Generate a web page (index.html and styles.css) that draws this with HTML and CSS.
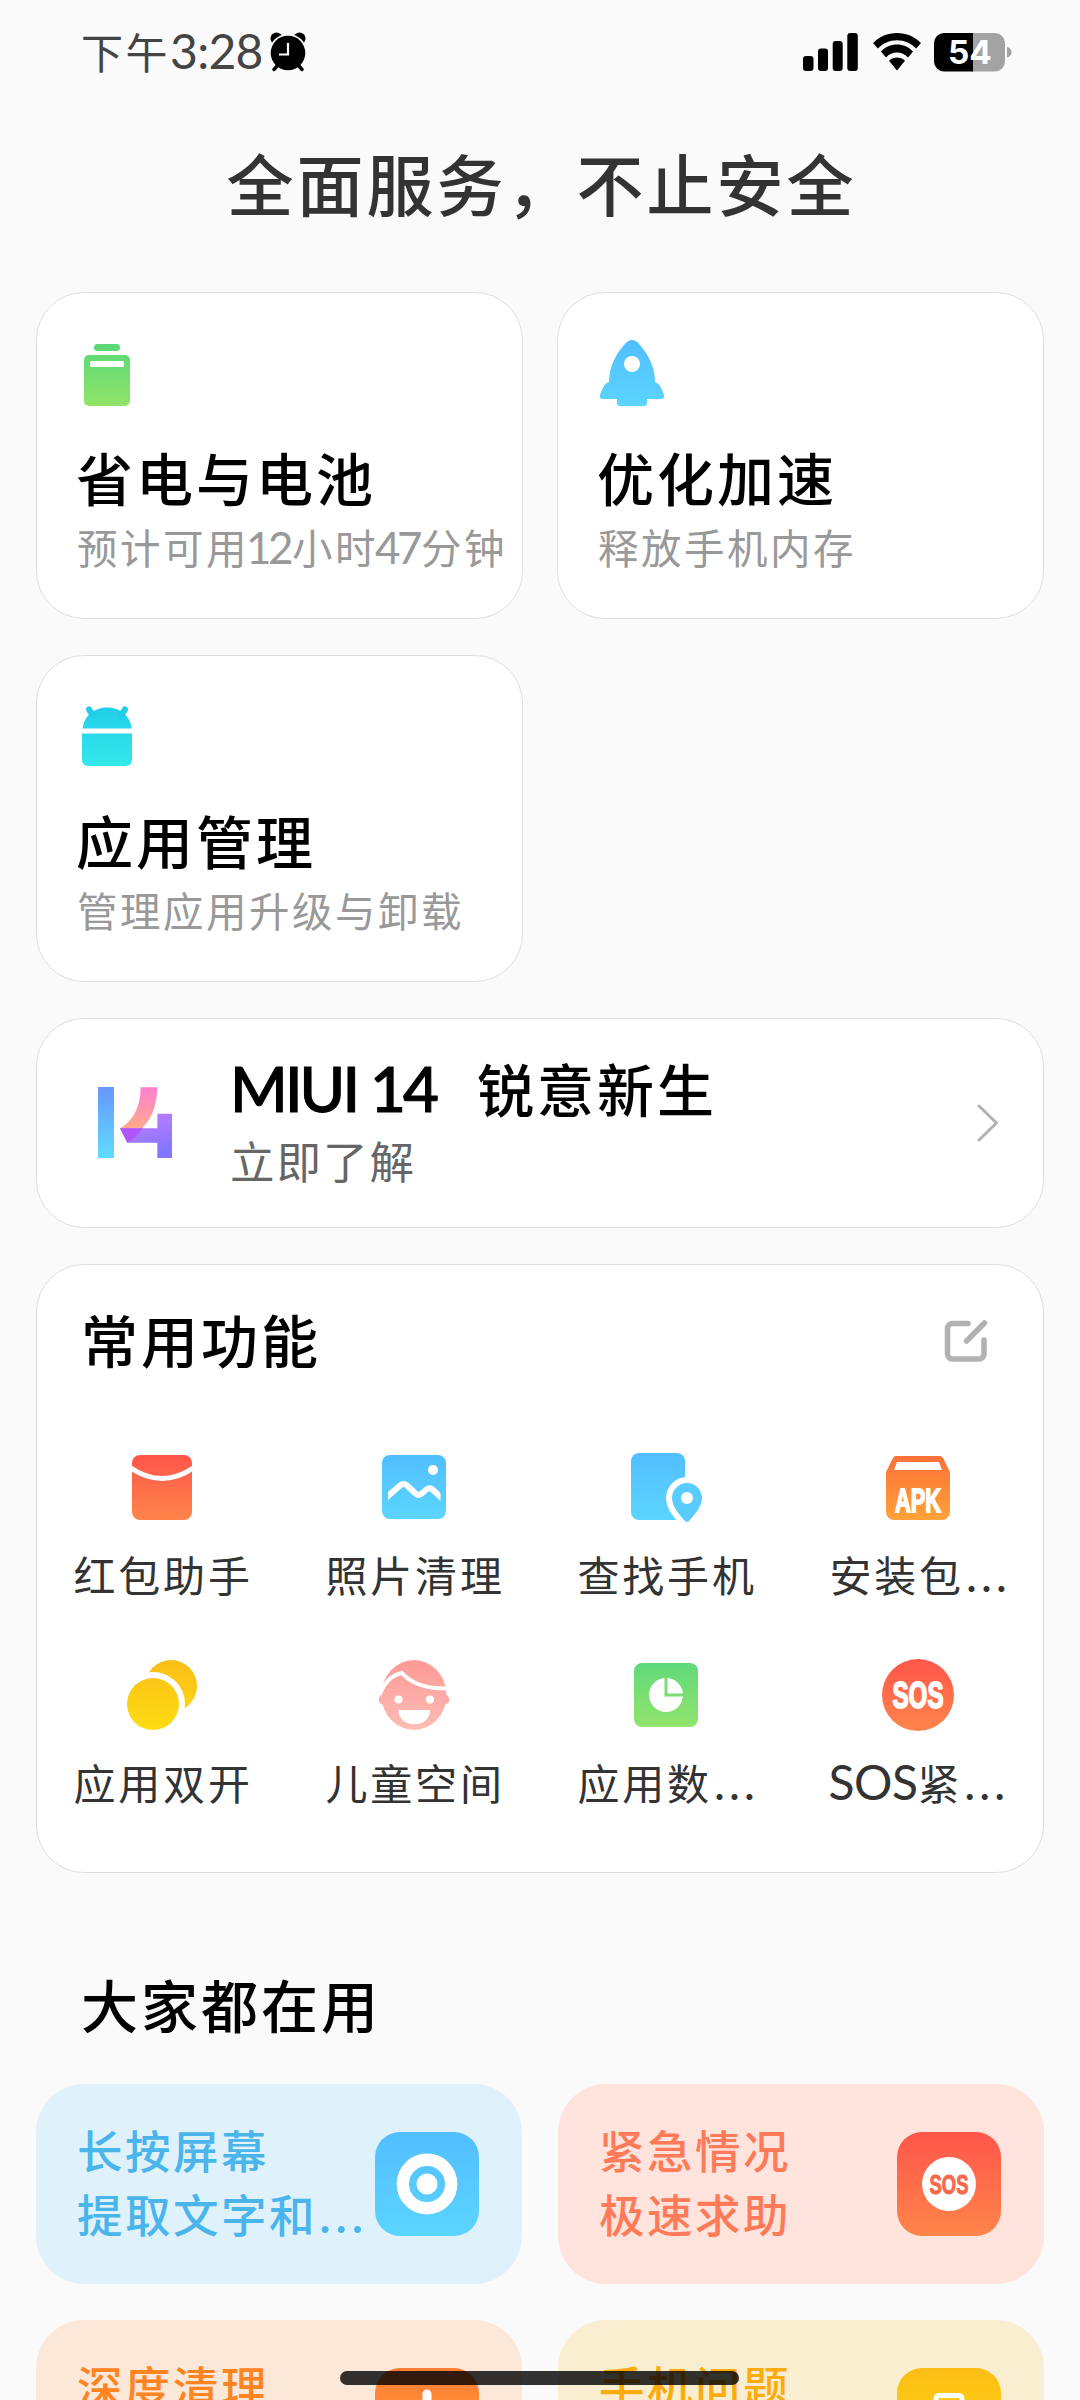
FILE: index.html
```html
<!DOCTYPE html>
<html lang="zh-CN">
<head>
<meta charset="utf-8">
<title>手机管家</title>
<link rel="stylesheet" href="styles.css">
</head>
<body>
<svg class="defs" aria-hidden="true">
  <defs>
    <linearGradient id="green" x1="0" y1="0" x2="0" y2="1"><stop offset="0" stop-color="#60d97b"/><stop offset="1" stop-color="#92e46c"/></linearGradient>
    <linearGradient id="greenAbs" gradientUnits="userSpaceOnUse" x1="0" y1="6" x2="0" y2="68"><stop offset="0" stop-color="#58d878"/><stop offset="1" stop-color="#90e468"/></linearGradient>
    <linearGradient id="blue" x1="0" y1="0" x2="0" y2="1"><stop offset="0" stop-color="#52beff"/><stop offset="1" stop-color="#5bd5ff"/></linearGradient>
    <linearGradient id="cyan" gradientUnits="userSpaceOnUse" x1="0" y1="6" x2="0" y2="65"><stop offset="0" stop-color="#22cdea"/><stop offset="1" stop-color="#33e9ea"/></linearGradient>
    <linearGradient id="red" x1="0" y1="0" x2="0" y2="1"><stop offset="0" stop-color="#ff564a"/><stop offset="1" stop-color="#ff854a"/></linearGradient>
    <linearGradient id="orange" x1="0" y1="0" x2="0" y2="1"><stop offset="0" stop-color="#fb7138"/><stop offset="1" stop-color="#ffa23a"/></linearGradient>
    <linearGradient id="clean" x1="0" y1="0" x2="0" y2="1"><stop offset="0" stop-color="#ff7c34"/><stop offset="1" stop-color="#ffa63a"/></linearGradient>
    <linearGradient id="yellow" gradientUnits="userSpaceOnUse" x1="0" y1="5" x2="0" y2="75"><stop offset="0" stop-color="#fbbd18"/><stop offset="1" stop-color="#fddd12"/></linearGradient>
    <linearGradient id="amber" x1="0" y1="0" x2="0" y2="1"><stop offset="0" stop-color="#fcbd14"/><stop offset="1" stop-color="#fddd14"/></linearGradient>
    <linearGradient id="pink" gradientUnits="userSpaceOnUse" x1="0" y1="5" x2="0" y2="75"><stop offset="0" stop-color="#ff9995"/><stop offset="1" stop-color="#fcbdb6"/></linearGradient>
    <linearGradient id="logoBar" x1="0" y1="0" x2="0" y2="1"><stop offset="0" stop-color="#6797ff"/><stop offset="1" stop-color="#60dcff"/></linearGradient>
    <linearGradient id="logoPink" x1="0" y1="0" x2="0" y2="1"><stop offset="0" stop-color="#ff7fd0"/><stop offset="1" stop-color="#ffaa8c"/></linearGradient>
    <linearGradient id="logoPurple" x1="0" y1="0" x2=".3" y2="1"><stop offset="0" stop-color="#c47fff"/><stop offset="1" stop-color="#8476ff"/></linearGradient>
  </defs>
</svg>

<header class="status">
  <div class="status-left">
    <span class="clock">下午<span class="clock-digits">3:28</span></span>
    <svg class="alarm" width="36" height="40" viewBox="0 0 36 40">
      <circle cx="6.500" cy="6.500" r="6"/><circle cx="29.500" cy="6.500" r="6"/>
      <circle cx="18" cy="21" r="19" fill="#fafafa"/>
      <path d="M8 33l-4 4.500M28 33l4 4.500" stroke="#000" stroke-width="3.500" stroke-linecap="round"/>
      <circle cx="18" cy="21" r="17.300"/>
      <path d="M18 11v11.500H9" fill="none" stroke="#fff" stroke-width="2.200"/>
    </svg>
  </div>
  <div class="status-right">
    <svg width="55" height="38" viewBox="0 0 55 38">
      <rect x="0" y="23" width="10.500" height="15" rx="3"/><rect x="15" y="15.500" width="10" height="22.500" rx="3"/>
      <rect x="29.700" y="8" width="10" height="30" rx="3"/><rect x="44.300" y="0" width="10.500" height="38" rx="3"/>
    </svg>
    <svg width="48" height="38" viewBox="0 0 48 38">
      <path d="M24 0C14.500 0 6.500 3.500 0 10l4.800 5.600C10 10.300 16.500 7.300 24 7.300s14 3 19.200 8.300L48 10C41.500 3.500 33.500 0 24 0z"/>
      <path d="M24 11.500c-6.200 0-11.700 2.500-16 7l5 6c3-3.200 6.800-5 11-5s8 1.800 11 5l5-6c-4.300-4.500-9.800-7-16-7z"/>
      <path d="M24 24.500c-3 0-5.600 1-8 3.200L24 37.500l8-9.800c-2.400-2.200-5-3.200-8-3.200z"/>
    </svg>
    <svg width="78" height="39" viewBox="0 0 78 39">
      <path d="M38 0H61a10 10 0 0 1 10 10V28.500a10 10 0 0 1-10 10H38z" fill="#a3a3a3"/>
      <path d="M39 0H10A10 10 0 0 0 0 10V28.500a10 10 0 0 0 10 10H39z"/>
      <path d="M73 14c6 1.500 6 9 0 10.500z" fill="#a3a3a3"/>
      <text class="battery-level" x="36" y="31" text-anchor="middle" textLength="44" lengthAdjust="spacingAndGlyphs">54</text>
    </svg>
  </div>
</header>

<h1 class="headline">全面服务，不止安全</h1>

<main class="content">
  <section class="tiles">
    <article class="card tile">
      <svg width="72" height="72" viewBox="0 0 72 72" fill="url(#greenAbs)">
        <rect x="16" y="6" width="26" height="7" rx="3.500"/>
        <path fill-rule="evenodd" d="M11 17H47a5 5 0 0 1 5 5V63a5 5 0 0 1-5 5H11a5 5 0 0 1-5-5V22a5 5 0 0 1 5-5zM13.500 23a1.500 1.500 0 0 0-1.500 1.500v3a1.500 1.500 0 0 0 1.500 1.500h31a1.500 1.500 0 0 0 1.500-1.500v-3a1.500 1.500 0 0 0-1.500-1.500z"/>
      </svg>
      <h2 class="title">省电与电池</h2>
      <p class="sub">预计可用<span class="num">12</span>小时<span class="num">47</span>分钟</p>
    </article>
    <article class="card tile">
      <svg width="72" height="72" viewBox="0 0 72 72">
        <path fill="url(#blue)" d="M33 2c3 0 6 2 8 5C50 17 56 30 56 44c5 2 6 5 9 13q1 4-3 4H48v4q0 3-3 3H21q-3 0-3-3v-4H4q-4 0-3-4c3-8 4-11 9-13C10 30 16 17 25 7c2-3 5-5 8-5z"/>
        <circle cx="33" cy="26" r="8" fill="#fff"/>
      </svg>
      <h2 class="title">优化加速</h2>
      <p class="sub">释放手机内存</p>
    </article>
    <article class="card tile">
      <svg width="72" height="72" viewBox="0 0 72 72" fill="url(#cyan)">
        <path d="M4.700 27.500C6 14 17 6.500 29 6.500s23 7 24.700 21z"/>
        <path d="M4 32.500H54V59a6 6 0 0 1-6 6H10a6 6 0 0 1-6-6z"/>
        <path d="M11 8.500l4 6M47 8.500l-4 6" stroke="#22cdea" stroke-width="6" stroke-linecap="round"/>
      </svg>
      <h2 class="title">应用管理</h2>
      <p class="sub">管理应用升级与卸载</p>
    </article>
  </section>

  <section class="card banner">
    <svg class="logo" width="74" height="71" viewBox="0 0 222 213">
      <rect width="48" height="213" fill="url(#logoBar)"/>
      <path d="M178 80h44v133h-44v-46H88L66 124h112z" fill="url(#logoPurple)"/>
      <path d="M128 1h50c-1 50-14 92-46 123H66C104 104 128 60 128 1z" fill="url(#logoPink)"/>
      <path d="M66 124h68c-12 18-27 33-46 43z" fill="#b055f8"/>
    </svg>
    <div class="banner-text">
      <h2 class="title"><span class="latin">MIUI 14</span>锐意新生</h2>
      <p class="banner-sub">立即了解</p>
    </div>
    <svg class="chevron" width="22" height="38" viewBox="0 0 22 38"><path d="M2 2l17.500 17L2 36" fill="none" stroke="#b2b2b2" stroke-width="3" stroke-linecap="round" stroke-linejoin="round"/></svg>
  </section>

  <section class="card tools">
    <div class="tools-head">
      <h2 class="title">常用功能</h2>
      <svg width="44" height="44" viewBox="0 0 44 44" fill="none" stroke="#b2b2b2" stroke-width="5.500" stroke-linecap="round">
        <path d="M24 5.500H8.500a5 5 0 0 0-5 5V36a5 5 0 0 0 5 5H35a5 5 0 0 0 5-5V22"/><path d="M22.500 23L40.500 5"/>
      </svg>
    </div>
    <div class="grid">
      <div class="tool">
        <svg width="80" height="80" viewBox="0 0 80 80">
          <rect x="10" y="8" width="60" height="65" rx="8" fill="url(#red)"/>
          <path d="M8 20.500Q24 31.500 40 31.500T72 20.500" fill="none" stroke="#fff" stroke-width="5"/>
        </svg>
        <span>红包助手</span>
      </div>
      <div class="tool">
        <svg width="80" height="80" viewBox="0 0 80 80">
          <clipPath id="photoClip"><rect x="14" y="20" width="52.500" height="45"/></clipPath>
          <rect x="8" y="8" width="64" height="64" rx="8" fill="url(#blue)"/>
          <circle cx="59" cy="23" r="5" fill="#fff"/>
          <path clip-path="url(#photoClip)" d="M10 52.500L26 38.500Q29.500 35.500 33 38.500L42 47Q44.500 49 47 47L52.500 42.500Q55.500 40 58.500 42.500L70 53" fill="none" stroke="#fff" stroke-width="6"/>
        </svg>
        <span>照片清理</span>
      </div>
      <div class="tool">
        <svg width="80" height="80" viewBox="0 0 80 80">
          <rect x="5" y="6" width="54" height="67" rx="8" fill="url(#blue)"/>
          <path d="M61 36a15 15 0 0 1 15 15c0 9-8 17-13 23q-2 2-4 0c-5-6-13-14-13-23a15 15 0 0 1 15-15z" fill="#5accff" stroke="#fff" stroke-width="12" paint-order="stroke"/>
          <circle cx="61" cy="51" r="6" fill="#fff"/>
        </svg>
        <span>查找手机</span>
      </div>
      <div class="tool">
        <svg width="80" height="80" viewBox="0 0 80 80">
          <path d="M18 9H62q2 0 3 2l7 14V65a8 8 0 0 1-8 8H16a8 8 0 0 1-8-8V25l7-14q1-2 3-2z" fill="url(#orange)"/>
          <path d="M19 15H61l3 8H16z" fill="#fff"/>
          <text class="badge" x="17" y="64.500" font-size="33" textLength="46" lengthAdjust="spacingAndGlyphs">APK</text>
        </svg>
        <span>安装包<i class="dots">…</i></span>
      </div>
      <div class="tool">
        <svg width="80" height="80" viewBox="0 0 80 80">
          <circle cx="49" cy="31" r="26" fill="url(#yellow)"/>
          <circle cx="31" cy="49" r="32" fill="#fff"/>
          <circle cx="31" cy="49" r="26" fill="url(#yellow)"/>
        </svg>
        <span>应用双开</span>
      </div>
      <div class="tool">
        <svg width="80" height="80" viewBox="0 0 80 80">
          <g fill="url(#pink)"><ellipse cx="40" cy="40" rx="32.500" ry="35"/><circle cx="10" cy="44.500" r="5.300"/><circle cx="70" cy="44.500" r="5.300"/></g>
          <path d="M6 39Q13 21 28 18Q42 34.500 76 33.500" fill="none" stroke="#fff" stroke-width="4"/>
          <circle cx="24.500" cy="44.500" r="4" fill="#fff"/><circle cx="56" cy="44.500" r="4" fill="#fff"/>
          <path d="M24.500 55H56c0 9-7 14.300-15.700 14.300S24.500 64 24.500 55z" fill="#fff"/>
        </svg>
        <span>儿童空间</span>
      </div>
      <div class="tool">
        <svg width="80" height="80" viewBox="0 0 80 80">
          <rect x="8" y="8" width="64" height="64" rx="8" fill="url(#green)"/>
          <circle cx="40" cy="40" r="17" fill="#fff"/>
          <path d="M40 22V40H58" fill="none" stroke="#78dd76" stroke-width="3"/>
        </svg>
        <span>应用数<i class="dots">…</i></span>
      </div>
      <div class="tool">
        <svg width="80" height="80" viewBox="0 0 80 80">
          <circle cx="40" cy="40" r="36" fill="url(#red)"/>
          <text class="badge" x="14.500" y="53" font-size="36" textLength="51" lengthAdjust="spacingAndGlyphs">SOS</text>
        </svg>
        <span><b class="sos">SOS</b>紧<i class="dots">…</i></span>
      </div>
    </div>
  </section>

  <h2 class="title section-title">大家都在用</h2>

  <section class="features">
    <article class="feature feature-blue">
      <p>长按屏幕<br>提取文字和<i class="dots">…</i></p>
      <svg width="104" height="104" viewBox="0 0 104 104">
        <rect width="104" height="104" rx="25" fill="url(#blue)"/>
        <circle cx="52" cy="52" r="24.200" fill="none" stroke="#fff" stroke-width="12.400"/>
        <circle cx="52" cy="52" r="10.500" fill="#fff"/>
      </svg>
    </article>
    <article class="feature feature-red">
      <p>紧急情况<br>极速求助</p>
      <svg width="104" height="104" viewBox="0 0 104 104">
        <rect width="104" height="104" rx="25" fill="url(#red)"/>
        <circle cx="52" cy="52" r="27" fill="#fff"/>
        <text class="badge badge-red" x="32.500" y="62" font-size="28" textLength="39" lengthAdjust="spacingAndGlyphs">SOS</text>
      </svg>
    </article>
    <article class="feature feature-orange">
      <p>深度清理<br>释放存储空间</p>
      <svg width="104" height="104" viewBox="0 0 104 104">
        <rect width="104" height="104" rx="25" fill="url(#clean)"/>
        <path d="M52 26V48M36 52H68l5 26H31z" fill="#fff" stroke="#fff" stroke-width="9" stroke-linecap="round" stroke-linejoin="round"/>
      </svg>
    </article>
    <article class="feature feature-yellow">
      <p>手机问题<br>一键检测</p>
      <svg width="104" height="104" viewBox="0 0 104 104">
        <rect width="104" height="104" rx="25" fill="url(#amber)"/>
        <rect x="39" y="27.500" width="26" height="48" rx="3" fill="none" stroke="#fff" stroke-width="5"/>
      </svg>
    </article>
  </section>
</main>
<div class="home-bar"></div>
</body>
</html>
```
FILE: styles.css
```css
* { box-sizing: border-box; margin: 0; padding: 0; }

body {
  position: relative;
  width: 1080px;
  height: 2400px;
  overflow: hidden;
  background: #fafafa;
  color: #000;
  font-family: "Noto Sans CJK SC", sans-serif;
}

svg { display: block; flex: none; }
.defs { position: absolute; width: 0; height: 0; }

/* status bar */
.status {
  display: flex;
  justify-content: space-between;
  height: 120px;
  padding: 32px 68px 0 81px;
}
.status-left { display: flex; height: 40px; align-items: center; gap: 8px; }
.status-right { display: flex; height: 40px; align-items: center; gap: 15px; }
.status-right svg:last-child { margin-left: -2px; }
.clock {
  width: 181px;
  margin-top: -3px;
  color: #444;
  font-size: 42px;
  line-height: 40px;
  letter-spacing: 2.5px;
  white-space: nowrap;
}
.clock-digits { font-family: Lato, sans-serif; font-size: 48px; letter-spacing: -.7px; line-height: 1; }
.battery-level { fill: #fff; font: 700 33px Inter, sans-serif; }

.headline {
  height: 172px;
  padding: 12px 0 0 3px;
  color: #333;
  font-size: 67px;
  font-weight: 500;
  line-height: 100px;
  letter-spacing: 3px;
  text-align: center;
}

.content { padding: 0 36px; }

.card {
  background: #fff;
  border: 1px solid #dedede;
  border-radius: 48px;
}

.title {
  font-size: 57px;
  font-weight: 500;
  line-height: 80px;
  letter-spacing: 3px;
  white-space: nowrap;
}

/* top tiles */
.tiles { display: grid; grid-template-columns: 487px 487px; gap: 36px 34px; }
.tile { height: 327px; padding: 45px 0 0 41px; }
.tile .title { margin: 26px 0 0 -2px; }
.sub {
  margin: 3px 0 0 -1px;
  color: #999;
  font-size: 40.500px;
  line-height: 56px;
  letter-spacing: 2.500px;
  white-space: nowrap;
}
.num { margin: 0 2px 0 -3px; font-family: Lato, sans-serif; font-size: 44px; letter-spacing: -3.500px; line-height: 1; }

/* promo banner */
.banner {
  display: flex;
  align-items: center;
  height: 210px;
  margin-top: 36px;
  padding: 0 44px 0 61px;
}
.logo { margin-top: -2px; }
.banner-text { flex: 1; margin: -6px 0 0 58px; }
.banner-sub { color: #666; font-size: 44.500px; line-height: 66px; letter-spacing: 2px; }
.latin {
  display: inline-block;
  width: 247px;
  font-family: Lato, sans-serif;
  font-size: 62px;
  letter-spacing: -2.900px;
  line-height: 1;
  -webkit-text-stroke: 1px #000;
}

/* common functions */
.tools { height: 609px; margin-top: 36px; }
.tools-head {
  display: flex;
  align-items: center;
  justify-content: space-between;
  height: 150px;
  padding: 0 55px 0 44px;
}
.tools-head .title { margin-top: -4px; }
.grid {
  display: grid;
  grid-template-columns: repeat(4, 1fr);
  grid-auto-rows: 208px;
  margin: 32px -1px 0;
}
.tool { display: flex; flex-direction: column; align-items: center; }
.tool span {
  width: 177px;
  margin-top: 16px;
  color: #333;
  font-size: 42px;
  line-height: 62px;
  letter-spacing: 2.800px;
  white-space: nowrap;
}
.dots { font-size: 1.07em; font-style: normal; line-height: 0; vertical-align: -15px; }
.sos { margin-left: -1px; font-family: Lato, sans-serif; font-size: 48px; font-weight: 400; letter-spacing: -.5px; line-height: 1; }
.badge { font-family: "Liberation Sans Narrow", "Liberation Sans", sans-serif; font-weight: 700; fill: #fff; stroke: #fff; stroke-width: 1.8; }
.badge-red { fill: #f46a4c; stroke: #f46a4c; stroke-width: 1; }

.section-title { margin: 90px 0 0 45px; }

/* feature cards */
.features { display: grid; grid-template-columns: 1fr 1fr; gap: 36px; margin-top: 41px; }
.feature {
  display: flex;
  align-items: center;
  justify-content: space-between;
  height: 200px;
  padding: 0 43px 0 41px;
  border-radius: 48px;
}
.feature p {
  margin-top: -7px;
  width: 290px;
  font-size: 45.500px;
  font-weight: 500;
  line-height: 64px;
  letter-spacing: 2.500px;
  white-space: nowrap;
}
.feature-blue { background: #dff1fb; color: #4ab5ea; }
.feature-red { background: #ffe4dd; color: #ff7a58; }
.feature-orange { background: #fce8d9; color: #ff8422; }
.feature-yellow { background: #faeed1; color: #fcab0c; }

.home-bar {
  position: absolute;
  left: 340px;
  top: 2371px;
  width: 399px;
  height: 14px;
  border-radius: 7px;
  background: rgba(0, 0, 0, .8);
}
```
